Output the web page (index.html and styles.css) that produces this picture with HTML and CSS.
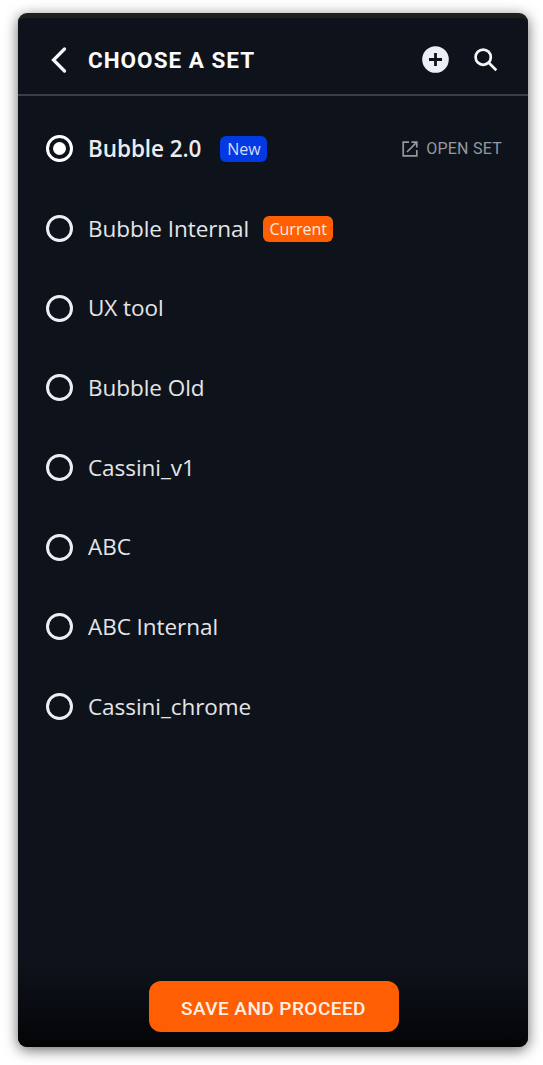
FILE: index.html
```html
<!DOCTYPE html>
<html lang="en">
<head>
    <meta charset="UTF-8">
    <meta name="viewport" content="width=device-width, initial-scale=1.0">
    <title>Choose a set</title>
    <link rel="stylesheet" href="styles.css">
</head>
<body>
    <div class="panel">
        <header class="header">
            <svg class="back" viewBox="0 0 18 28"><path d="M14.5 3 L3.5 14 L14.5 25"/></svg>
            <h1 class="title">CHOOSE A SET</h1>
            <svg class="add" viewBox="0 0 27 27">
                <circle cx="13.5" cy="13.5" r="13.3"/>
                <path d="M13.5 7 V20 M7 13.5 H20"/>
            </svg>
            <svg class="search" viewBox="0 0 24 24">
                <circle cx="9.2" cy="9.2" r="7.6"/>
                <path d="M14.8 14.8 L22.3 22.3"/>
            </svg>
        </header>

        <ul class="sets">
            <li class="set selected">
                <span class="radio"></span>
                <span class="name">Bubble 2.0</span>
                <span class="badge new">New</span>
                <a class="open">
                    <svg viewBox="0 0 16 16"><path d="M7 1.2 H1.2 V14.8 H14.8 V9 M9.5 1.2 H14.8 V6.5 M14.8 1.2 L5 11"/></svg>
                    <span>OPEN SET</span>
                </a>
            </li>
            <li class="set">
                <span class="radio"></span>
                <span class="name">Bubble Internal</span>
                <span class="badge current">Current</span>
            </li>
            <li class="set"><span class="radio"></span><span class="name">UX tool</span></li>
            <li class="set"><span class="radio"></span><span class="name">Bubble Old</span></li>
            <li class="set"><span class="radio"></span><span class="name">Cassini_v1</span></li>
            <li class="set"><span class="radio"></span><span class="name">ABC</span></li>
            <li class="set"><span class="radio"></span><span class="name">ABC Internal</span></li>
            <li class="set"><span class="radio"></span><span class="name">Cassini_chrome</span></li>
        </ul>

        <footer class="footer">
            <button class="save">SAVE AND PROCEED</button>
        </footer>
    </div>
</body>
</html>
```
FILE: styles.css
```css
* {
    box-sizing: border-box;
}

body {
    margin: 0;
    padding: 13px 15px 18px 18px;
    height: 1065px;
    background-color: #fff;
    font-family: 'Open Sans', sans-serif;
    overflow: hidden;
}

.panel {
    display: flex;
    flex-direction: column;
    height: 1034px;
    background-color: #0e131b;
    border-top: 5px solid #1d1e1e;
    border-radius: 9px;
    box-shadow: 0 3px 14px rgba(0, 0, 0, 0.6);
    overflow: hidden;
}

.header {
    display: flex;
    align-items: center;
    height: 78px;
    padding: 7px 30px 0 32px;
    border-bottom: 2px solid #3b3f49;
}

.header svg {
    fill: none;
    stroke: #f5f6f8;
}

.back {
    width: 18px;
    height: 28px;
    stroke-width: 3.2;
    stroke-linecap: round;
}

.title {
    flex: 1;
    margin: 0 0 0 20px;
    font-family: Roboto, sans-serif;
    font-size: 22.5px;
    line-height: 28px;
    font-weight: 700;
    letter-spacing: 1px;
    color: #fbfbfb;
}

.header .add {
    width: 27px;
    height: 27px;
    margin-right: 25px;
}

.header .add circle {
    fill: #eceff6;
    stroke: none;
}

.header .add path {
    stroke: #0e131b;
    stroke-width: 2.8;
}

.search {
    width: 24px;
    height: 24px;
    stroke-width: 2.7;
}

.sets {
    flex: 1;
    list-style: none;
    margin: 0;
    padding: 13px 26px 0 28px;
}

.set {
    display: flex;
    align-items: center;
    height: 79.7px;
}

.radio {
    width: 27px;
    height: 27px;
    border: 3px solid #eceef1;
    border-radius: 50%;
}

.selected .radio {
    padding: 4px;
    background-color: #fff;
    background-clip: content-box;
    border-color: #fff;
}

.name {
    margin-left: 15px;
    font-size: 22.5px;
    line-height: 30px;
    letter-spacing: -0.05px;
    color: #e4e5e7;
}

.selected .name {
    font-weight: 600;
    letter-spacing: -0.07px;
    color: #ececee;
}

.badge {
    height: 26px;
    border-radius: 6px;
    font-size: 16px;
    line-height: 27px;
    text-align: center;
    color: #fff;
}

.new {
    width: 47px;
    margin-left: 19px;
    background-color: #0339e3;
    color: #d3dcfb;
}

.current {
    width: 70px;
    margin-left: 14px;
    background-color: #ff5f02;
    color: #ffebdd;
}

.open {
    display: flex;
    align-items: center;
    gap: 8px;
    margin-left: auto;
    font-family: Roboto, sans-serif;
    font-size: 16px;
    font-weight: 450;
    letter-spacing: 0.25px;
    color: #95989d;
}

.open svg {
    width: 16px;
    height: 16px;
    fill: none;
    stroke: #95989d;
    stroke-width: 1.7;
}

.footer {
    display: flex;
    justify-content: center;
    height: 82px;
    padding: 16px 0 0 1px;
    background: linear-gradient(#0e131b, #030406);
}

.save {
    width: 250px;
    height: 51px;
    padding: 3px 0 0;
    border: none;
    border-radius: 12px;
    background-color: #ff5f02;
    font-family: Roboto, sans-serif;
    font-size: 19px;
    font-weight: 500;
    letter-spacing: 0.45px;
    color: #ffefe4;
}
```
